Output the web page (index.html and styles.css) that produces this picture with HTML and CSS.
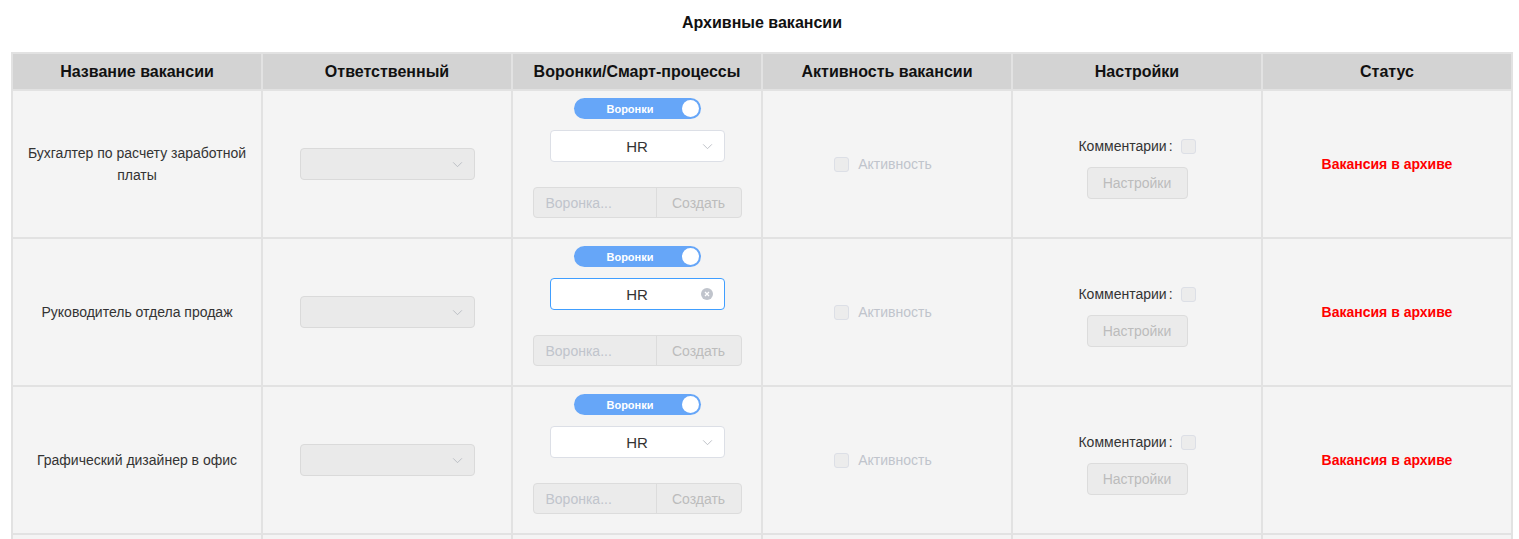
FILE: index.html
```html
<!DOCTYPE html>
<html lang="ru">
<head>
<meta charset="utf-8">
<title>Архивные вакансии</title>
<link rel="stylesheet" href="styles.css">
</head>
<body>
<h1 class="title">Архивные вакансии</h1>
<div class="table">
  <div class="th">Название вакансии</div>
  <div class="th">Ответственный</div>
  <div class="th">Воронки/Смарт-процессы</div>
  <div class="th">Активность вакансии</div>
  <div class="th">Настройки</div>
  <div class="th">Статус</div>

  <!-- row 1 -->
  <div class="td name">Бухгалтер по расчету заработной<br>платы</div>
  <div class="td"><div class="select disabled"><svg class="arrow" viewBox="0 0 12 8"><polyline points="1,1.5 6,6.5 11,1.5"/></svg></div></div>
  <div class="td funnel">
    <div class="switch"><span class="switch-text">Воронки</span><span class="knob"></span></div>
    <div class="select white"><span class="val">HR</span><svg class="arrow" viewBox="0 0 12 8"><polyline points="1,1.5 6,6.5 11,1.5"/></svg></div>
    <div class="group"><span class="g-input">Воронка...</span><span class="g-btn">Создать</span></div>
  </div>
  <div class="td"><label class="check"><span class="box"></span>Активность</label></div>
  <div class="td settings">
    <div class="comments">Комментарии<span class="colon">:</span><span class="box"></span></div>
    <div class="btn">Настройки</div>
  </div>
  <div class="td status">Вакансия в архиве</div>

  <!-- row 2 -->
  <div class="td name">Руководитель отдела продаж</div>
  <div class="td"><div class="select disabled"><svg class="arrow" viewBox="0 0 12 8"><polyline points="1,1.5 6,6.5 11,1.5"/></svg></div></div>
  <div class="td funnel">
    <div class="switch"><span class="switch-text">Воронки</span><span class="knob"></span></div>
    <div class="select white focus"><span class="val">HR</span><svg class="clear" viewBox="0 0 12 12"><circle cx="6" cy="6" r="6"/><path d="M4 4 L8 8 M8 4 L4 8"/></svg></div>
    <div class="group"><span class="g-input">Воронка...</span><span class="g-btn">Создать</span></div>
  </div>
  <div class="td"><label class="check"><span class="box"></span>Активность</label></div>
  <div class="td settings">
    <div class="comments">Комментарии<span class="colon">:</span><span class="box"></span></div>
    <div class="btn">Настройки</div>
  </div>
  <div class="td status">Вакансия в архиве</div>

  <!-- row 3 -->
  <div class="td name">Графический дизайнер в офис</div>
  <div class="td"><div class="select disabled"><svg class="arrow" viewBox="0 0 12 8"><polyline points="1,1.5 6,6.5 11,1.5"/></svg></div></div>
  <div class="td funnel">
    <div class="switch"><span class="switch-text">Воронки</span><span class="knob"></span></div>
    <div class="select white"><span class="val">HR</span><svg class="arrow" viewBox="0 0 12 8"><polyline points="1,1.5 6,6.5 11,1.5"/></svg></div>
    <div class="group"><span class="g-input">Воронка...</span><span class="g-btn">Создать</span></div>
  </div>
  <div class="td"><label class="check"><span class="box"></span>Активность</label></div>
  <div class="td settings">
    <div class="comments">Комментарии<span class="colon">:</span><span class="box"></span></div>
    <div class="btn">Настройки</div>
  </div>
  <div class="td status">Вакансия в архиве</div>

  <!-- row 4 (partially visible) -->
  <div class="td"></div><div class="td"></div><div class="td"></div>
  <div class="td"></div><div class="td"></div><div class="td"></div>
</div>
</body>
</html>
```

FILE: styles.css
```css
* { box-sizing: border-box; }
html, body { margin: 0; padding: 0; background: #fff; }
body {
  font-family: "Liberation Sans", Arial, sans-serif;
  color: #333;
  padding: 0 6px 0 11px;
  height: 539px;
  overflow: hidden;
}
.title {
  margin: 0;
  height: 52px;
  padding-top: 13px;
  font-size: 16px;
  font-weight: bold;
  line-height: 19px;
  color: #111;
  text-align: center;
}
.table {
  display: grid;
  grid-template-columns: repeat(6, 1fr);
  grid-template-rows: 35px repeat(4, 146px);
  gap: 2px;
  padding: 2px;
  background: #e2e2e2;
}
.th {
  background: #d3d3d3;
  font-size: 16px;
  font-weight: bold;
  color: #111;
  display: flex;
  align-items: center;
  justify-content: center;
}
.td {
  background: #f4f4f4;
  display: flex;
  flex-direction: column;
  align-items: center;
  justify-content: center;
  font-size: 14px;
}
.name {
  text-align: center;
  line-height: 22px;
  color: #333;
}
.select {
  width: 175px;
  height: 32px;
  border: 1px solid #dcdfe6;
  border-radius: 4px;
  display: flex;
  align-items: center;
  justify-content: center;
  position: relative;
}
.select.disabled { background: #eaeaea; border-color: #dadada; }
.select.white { background: #fff; }
.select.focus { border-color: #409eff; }
.select .val { font-size: 15px; color: #333; }
.arrow {
  position: absolute;
  right: 11px;
  top: 12px;
  width: 11px;
  height: 7px;
  fill: none;
  stroke: #b5b8bf;
  stroke-width: 1;
}
.clear {
  position: absolute;
  right: 11px;
  top: 9px;
  width: 12px;
  height: 12px;
}
.clear circle { fill: #c0c4cc; }
.clear path { stroke: #fff; stroke-width: 1.3; fill: none; }
.funnel {
  justify-content: flex-start;
  padding-top: 7px;
}
.switch {
  width: 127px;
  height: 21px;
  border-radius: 11px;
  background: #66a6f8;
  position: relative;
  display: flex;
  align-items: center;
  justify-content: center;
  padding-right: 14px;
}
.switch-text {
  color: #fff;
  font-size: 11px;
  font-weight: bold;
}
.knob {
  position: absolute;
  right: 2px;
  top: 2px;
  width: 17px;
  height: 17px;
  border-radius: 50%;
  background: #fff;
}
.funnel .select { margin-top: 11px; }
.group {
  margin-top: 25px;
  width: 209px;
  height: 31px;
  border: 1px solid #dcdcdc;
  border-radius: 4px;
  background: #ebebeb;
  display: flex;
  font-size: 14px;
}
.g-input {
  width: 123px;
  padding-left: 12px;
  display: flex;
  align-items: center;
  color: #c0c4cc;
  border-right: 1px solid #dcdcdc;
}
.g-btn {
  flex: 1;
  display: flex;
  align-items: center;
  justify-content: center;
  color: #bcbcbc;
}
.check {
  display: flex;
  align-items: center;
  color: #c0c4cc;
  font-size: 14px;
  margin-right: 8px;
}
.box {
  display: inline-block;
  width: 15px;
  height: 15px;
  border: 1px solid #dcdfe6;
  border-radius: 3px;
  background: #ececec;
}
.check .box { margin-right: 9px; }
.settings { padding-top: 8px; }
.comments {
  display: flex;
  align-items: center;
  color: #333;
  font-size: 14px;
  height: 18px;
}
.colon { margin: 0 8px 0 2px; }
.btn {
  margin-top: 12px;
  width: 101px;
  height: 32px;
  border: 1px solid #dcdcdc;
  border-radius: 4px;
  background: #ebebeb;
  color: #bcbcbc;
  font-size: 14px;
  display: flex;
  align-items: center;
  justify-content: center;
}
.status {
  color: #f00;
  font-weight: bold;
  font-size: 14px;
}
```
